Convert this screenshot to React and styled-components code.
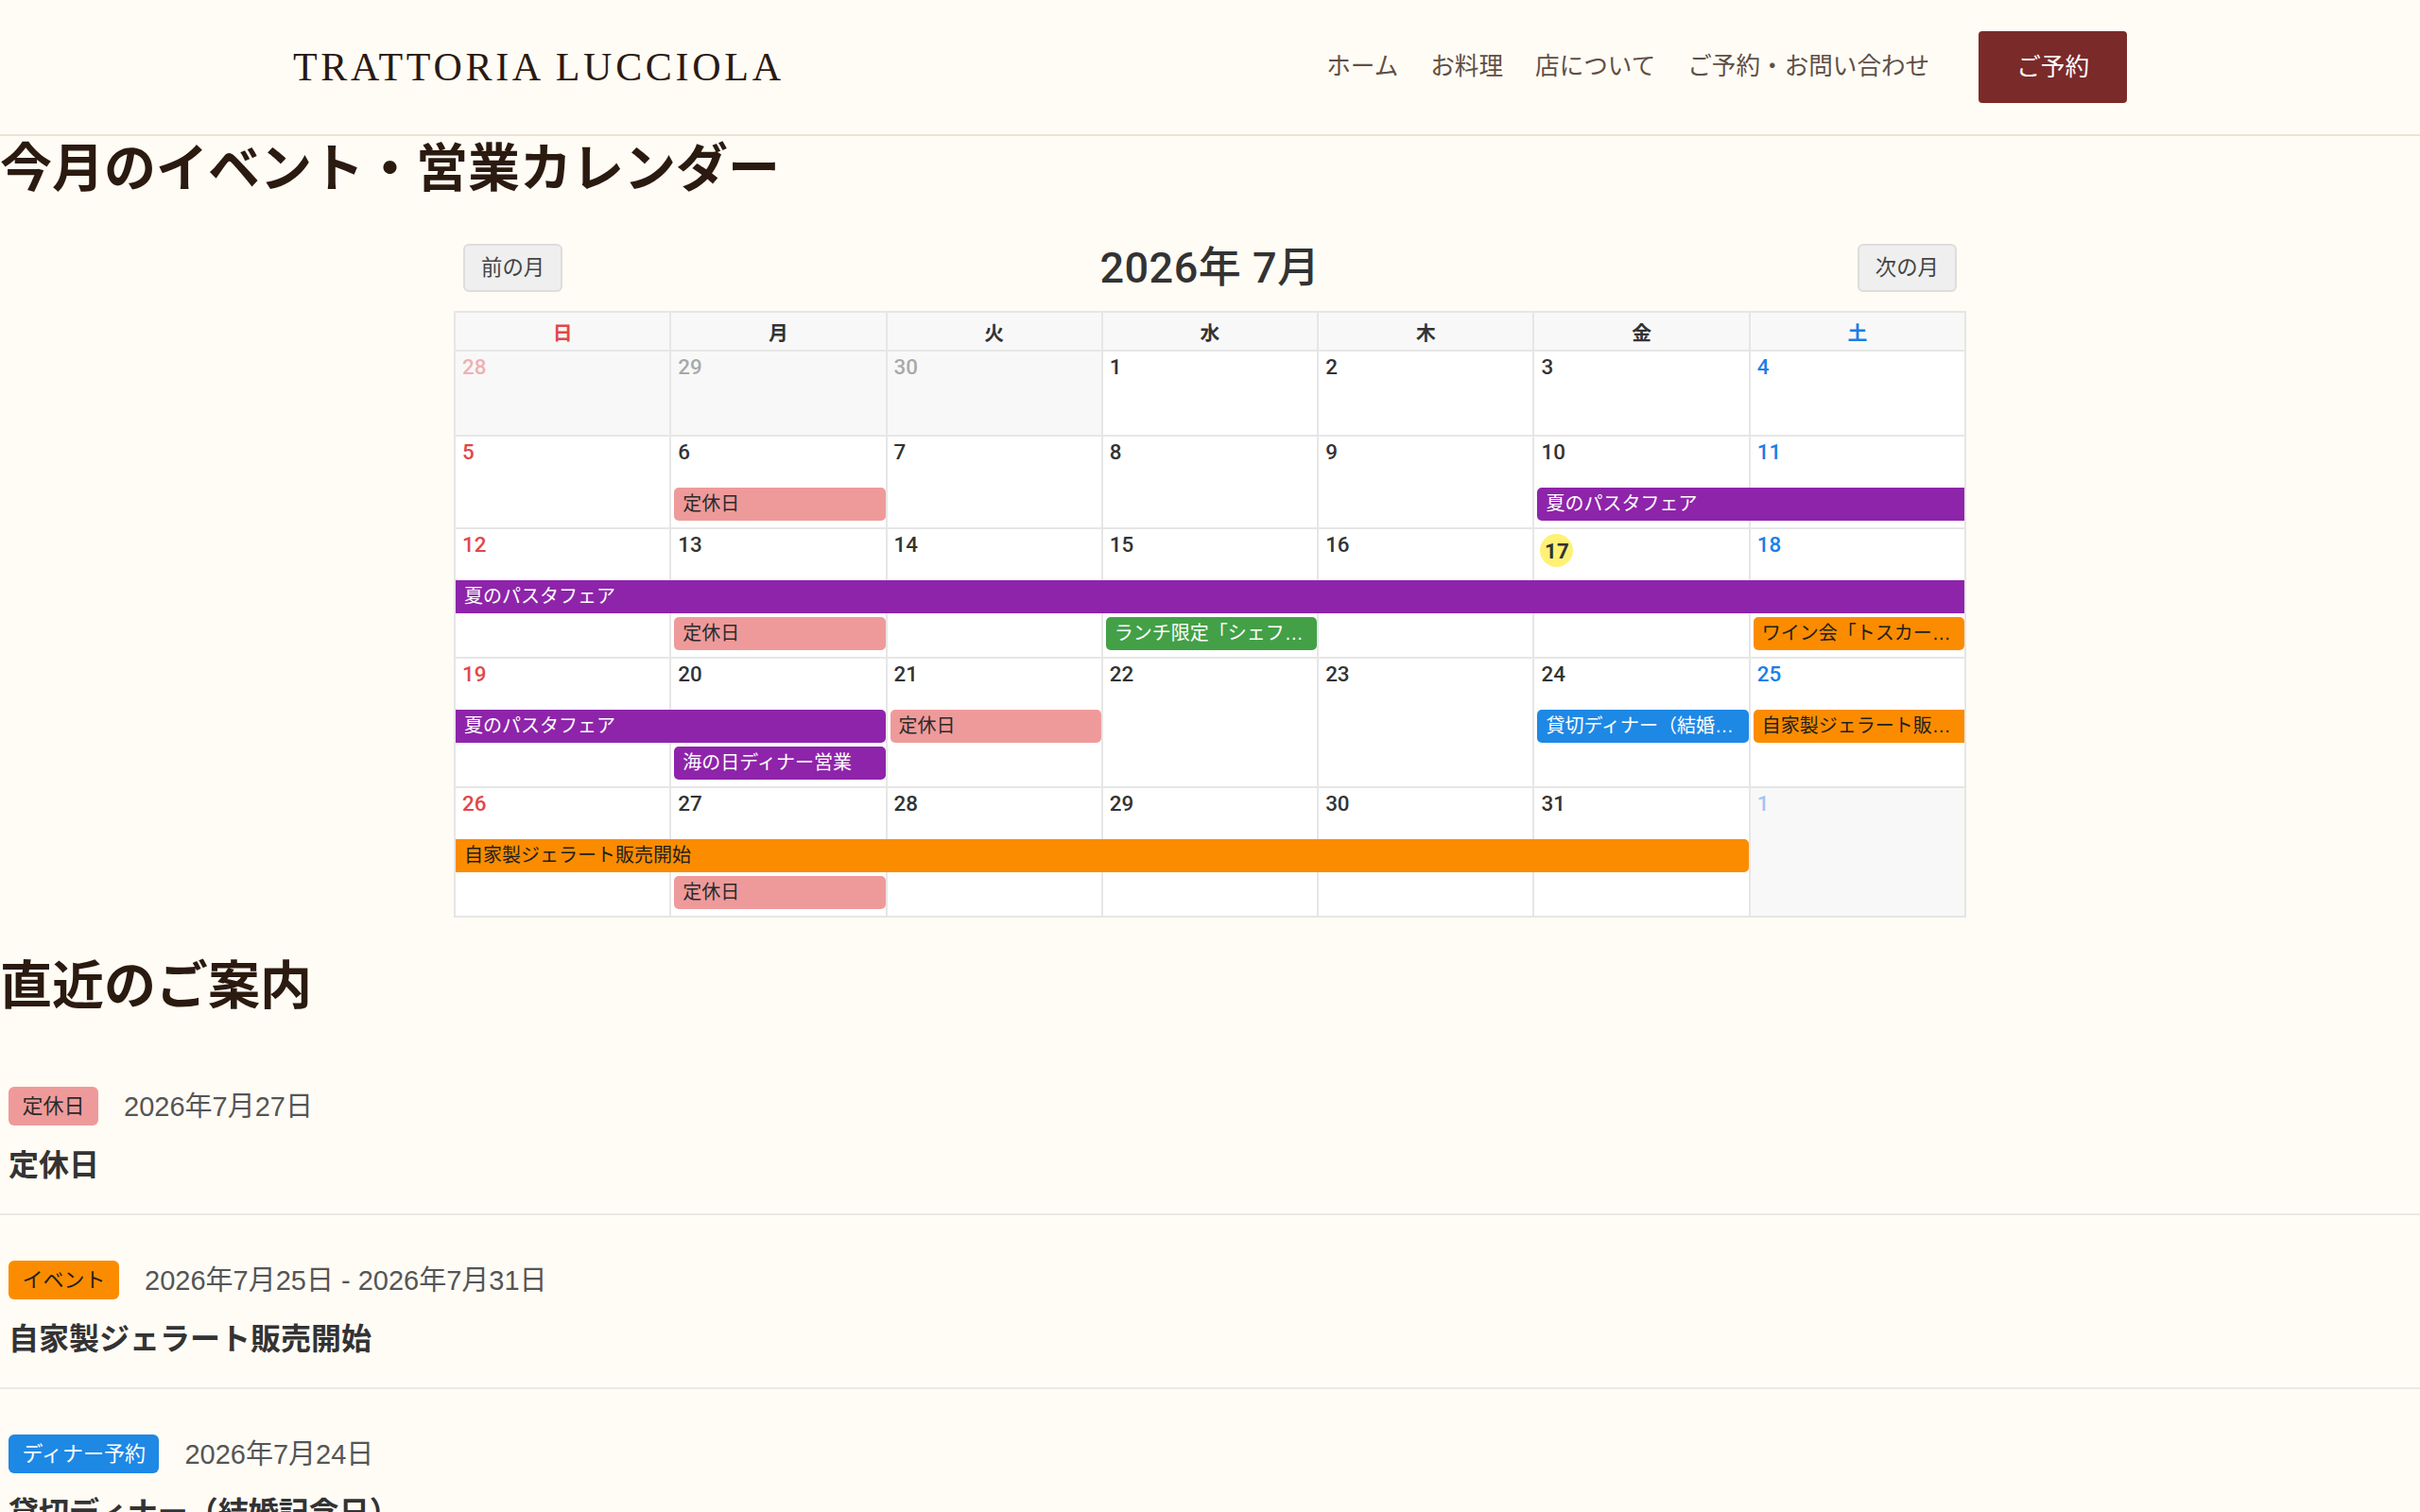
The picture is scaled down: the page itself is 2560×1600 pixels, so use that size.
import React from "react";
import styled, { createGlobalStyle } from "styled-components";

const GlobalStyle = createGlobalStyle`
  html, body {
    margin: 0;
    padding: 0;
    background: #fffcf5;
  }
  body {
    font-family: "Liberation Sans", "Noto Sans CJK JP", sans-serif;
    color: #333;
  }
  * {
    box-sizing: border-box;
  }
`;

const SERIF = `"Liberation Serif", "Noto Sans CJK JP", serif`;
const NUM = `Roboto, "Noto Sans CJK JP", sans-serif`;

const TYPES = {
  closed: { bg: "#ef9a9a", fg: "#2b2b2b" },
  fair: { bg: "#8e24aa", fg: "#ffffff" },
  lunch: { bg: "#43a047", fg: "#ffffff" },
  event: { bg: "#fb8c00", fg: "#1f1f1f" },
  dinner: { bg: "#1e88e5", fg: "#ffffff" },
};

const DOW = ["日", "月", "火", "水", "木", "金", "土"];
const dowColor = (i) => (i === 0 ? "#e0484a" : i === 6 ? "#1a7fe6" : "#333");

const PASTA = "夏のパスタフェア";
const GELATO = "自家製ジェラート販売開始";

const weeks = [
  { start: [6, 28], lanes: 0, bars: [] },
  {
    start: [7, 5],
    lanes: 1,
    bars: [
      { col: 2, span: 1, lane: 0, label: "定休日", type: "closed" },
      { col: 6, span: 2, lane: 0, label: PASTA, type: "fair", right: true },
    ],
  },
  {
    start: [7, 12],
    lanes: 2,
    bars: [
      { col: 1, span: 7, lane: 0, label: PASTA, type: "fair", left: true, right: true },
      { col: 2, span: 1, lane: 1, label: "定休日", type: "closed" },
      { col: 4, span: 1, lane: 1, label: "ランチ限定「シェフのおまかせパスタ」", type: "lunch" },
      { col: 7, span: 1, lane: 1, label: "ワイン会「トスカーナの夜」", type: "event" },
    ],
  },
  {
    start: [7, 19],
    lanes: 2,
    bars: [
      { col: 1, span: 2, lane: 0, label: PASTA, type: "fair", left: true },
      { col: 3, span: 1, lane: 0, label: "定休日", type: "closed" },
      { col: 6, span: 1, lane: 0, label: "貸切ディナー（結婚記念日）", type: "dinner" },
      { col: 7, span: 1, lane: 0, label: GELATO, type: "event", right: true },
      { col: 2, span: 1, lane: 1, label: "海の日ディナー営業", type: "fair" },
    ],
  },
  {
    start: [7, 26],
    lanes: 2,
    bars: [
      { col: 1, span: 6, lane: 0, label: GELATO, type: "event", left: true },
      { col: 2, span: 1, lane: 1, label: "定休日", type: "closed" },
    ],
  },
];

const upcoming = [
  { badge: "定休日", type: "closed", date: "2026年7月27日", title: "定休日" },
  {
    badge: "イベント",
    type: "event",
    date: "2026年7月25日 - 2026年7月31日",
    title: "自家製ジェラート販売開始",
  },
  {
    badge: "ディナー予約",
    type: "dinner",
    date: "2026年7月24日",
    title: "貸切ディナー（結婚記念日）",
  },
];

const daysOf = ([m, d]) => {
  const base = new Date(2026, m - 1, d);
  return Array.from({ length: 7 }, (_, i) => {
    const dt = new Date(base);
    dt.setDate(base.getDate() + i);
    return { day: dt.getDate(), other: dt.getMonth() !== 6 };
  });
};

/* header */

const HeaderBar = styled.header`
  height: 144px;
  border-bottom: 2px solid #ece3d7;
  display: flex;
  justify-content: center;
`;

const HeaderInner = styled.div`
  width: 1940px;
  display: flex;
  align-items: center;
  justify-content: space-between;
`;

const Logo = styled.div`
  font-family: "Liberation Serif", serif;
  font-size: 42px;
  letter-spacing: 3.7px;
  color: #2a1a12;
`;

const Nav = styled.nav`
  display: flex;
  align-items: center;
  gap: 34px;
`;

const NavLink = styled.a`
  font-size: 25.6px;
  line-height: 36px;
  margin-top: -2px;
  color: #5f4f45;
  text-decoration: none;
`;

const ReserveButton = styled.a`
  margin-left: 18px;
  padding: 19px 40px;
  line-height: 38px;
  font-size: 25.6px;
  color: #fff;
  background: #7b2a2a;
  border-radius: 4px;
  text-decoration: none;
`;

/* headings */

const SectionTitle = styled.h1`
  margin: ${(p) => p.$mt}px 0 ${(p) => p.$mb}px;
  font-family: ${SERIF};
  font-size: 55px;
  line-height: 66px;
  font-weight: 700;
  color: #2a1a10;
`;

/* calendar */

const Calendar = styled.section`
  width: 1600px;
  margin: 46px auto 0;
`;

const CalNav = styled.div`
  display: flex;
  align-items: center;
  justify-content: space-between;
  padding: 0 10px;
  margin-bottom: 20px;
`;

const MonthButton = styled.button`
  font-family: inherit;
  font-size: 22.4px;
  line-height: 31px;
  padding: 8px 17px;
  color: #444;
  background: #efefef;
  border: 2px solid #dddddd;
  border-radius: 6px;
`;

const MonthTitle = styled.h2`
  margin: 0;
  font-family: ${NUM};
  font-size: 45px;
  line-height: 51px;
  font-weight: 500;
  letter-spacing: 0.5px;
  color: #333;
`;

const Table = styled.div`
  border-top: 2px solid #e6e6e6;
  border-left: 2px solid #e6e6e6;
`;

const DowRow = styled.div`
  display: grid;
  grid-template-columns: repeat(7, 1fr);
  background: #f8f8f8;
`;

const DowCell = styled.div`
  height: 41px;
  display: flex;
  align-items: center;
  justify-content: center;
  font-size: 20.8px;
  font-weight: 700;
  color: ${(p) => p.$color};
  border-right: 2px solid #e6e6e6;
  border-bottom: 2px solid #e6e6e6;
`;

const Week = styled.div`
  display: grid;
  grid-template-columns: repeat(7, 1fr);
  grid-template-rows: 54px repeat(${(p) => p.$lanes}, 39px) minmax(5px, 1fr);
  min-height: 90px;
`;

const DayCell = styled.div`
  grid-row: 1 / -1;
  grid-column: ${(p) => p.$col};
  padding: 3px 7px 0;
  background: ${(p) => (p.$other ? "#f8f8f8" : "#fff")};
  border-right: 2px solid #e6e6e6;
  border-bottom: 2px solid #e6e6e6;
`;

const DayNum = styled.span`
  display: inline-block;
  font-family: ${NUM};
  font-size: 22.4px;
  font-weight: 500;
  line-height: 27px;
  color: ${(p) => p.$color};
  opacity: ${(p) => (p.$other ? 0.4 : 1)};
`;

const Today = styled.span`
  display: inline-flex;
  align-items: center;
  justify-content: center;
  width: 35px;
  height: 35px;
  margin: 2px 0 0 -1px;
  border-radius: 50%;
  background: #fff176;
  font-family: ${NUM};
  font-size: 22.4px;
  font-weight: 700;
  color: #333;
`;

const Bar = styled.div`
  grid-row: ${(p) => p.$lane + 2};
  grid-column: ${(p) => p.$col} / span ${(p) => p.$span};
  align-self: start;
  height: 35px;
  margin: 0 2px 0 ${(p) => (p.$left ? 0 : 3)}px;
  padding: 0 8px 0 9px;
  font-size: 20px;
  line-height: 35px;
  white-space: nowrap;
  overflow: hidden;
  text-overflow: ellipsis;
  color: ${(p) => TYPES[p.$type].fg};
  background: ${(p) => TYPES[p.$type].bg};
  border-radius: ${(p) => (p.$left ? 0 : 5)}px ${(p) => (p.$right ? 0 : 5)}px
    ${(p) => (p.$right ? 0 : 5)}px ${(p) => (p.$left ? 0 : 5)}px;
`;

/* upcoming list */

const Item = styled.article`
  padding: 48px 9px 27px;
  border-bottom: 2px solid #ebe9e5;
`;

const ItemMeta = styled.div`
  display: flex;
  align-items: center;
  gap: 27px;
`;

const Badge = styled.span`
  padding: 6.5px 14.5px;
  font-size: 22px;
  line-height: 28px;
  border-radius: 6px;
  color: ${(p) => TYPES[p.$type].fg};
  background: ${(p) => TYPES[p.$type].bg};
`;

const ItemDate = styled.span`
  font-size: 29px;
  line-height: 36px;
  color: #555;
`;

const ItemTitle = styled.h3`
  margin: 18px 0 0;
  font-family: ${SERIF};
  font-size: 32px;
  line-height: 48px;
  font-weight: 700;
  color: #333;
`;

const App = () => {
  return (
    <>
      <GlobalStyle />
      <HeaderBar>
        <HeaderInner>
          <Logo>TRATTORIA LUCCIOLA</Logo>
          <Nav>
            <NavLink href="#">ホーム</NavLink>
            <NavLink href="#">お料理</NavLink>
            <NavLink href="#">店について</NavLink>
            <NavLink href="#">ご予約・お問い合わせ</NavLink>
            <ReserveButton href="#">ご予約</ReserveButton>
          </Nav>
        </HeaderInner>
      </HeaderBar>

      <main>
        <SectionTitle $mt={2} $mb={0}>
          今月のイベント・営業カレンダー
        </SectionTitle>

        <Calendar>
          <CalNav>
            <MonthButton>前の月</MonthButton>
            <MonthTitle>2026年 7月</MonthTitle>
            <MonthButton>次の月</MonthButton>
          </CalNav>
          <Table>
            <DowRow>
              {DOW.map((d, i) => (
                <DowCell key={d} $color={dowColor(i)}>
                  {d}
                </DowCell>
              ))}
            </DowRow>
            {weeks.map((w, wi) => (
              <Week key={wi} $lanes={w.lanes}>
                {daysOf(w.start).map((d, i) => (
                  <DayCell key={i} $col={i + 1} $other={d.other}>
                    {!d.other && d.day === 17 ? (
                      <Today>17</Today>
                    ) : (
                      <DayNum $color={dowColor(i)} $other={d.other}>
                        {d.day}
                      </DayNum>
                    )}
                  </DayCell>
                ))}
                {w.bars.map((b, bi) => (
                  <Bar
                    key={bi}
                    $col={b.col}
                    $span={b.span}
                    $lane={b.lane}
                    $type={b.type}
                    $left={b.left}
                    $right={b.right}
                  >
                    {b.label}
                  </Bar>
                ))}
              </Week>
            ))}
          </Table>
        </Calendar>

        <SectionTitle as="h2" $mt={40} $mb={25}>
          直近のご案内
        </SectionTitle>
        {upcoming.map((it, i) => (
          <Item key={i}>
            <ItemMeta>
              <Badge $type={it.type}>{it.badge}</Badge>
              <ItemDate>{it.date}</ItemDate>
            </ItemMeta>
            <ItemTitle>{it.title}</ItemTitle>
          </Item>
        ))}
      </main>
    </>
  );
};

export default App;
